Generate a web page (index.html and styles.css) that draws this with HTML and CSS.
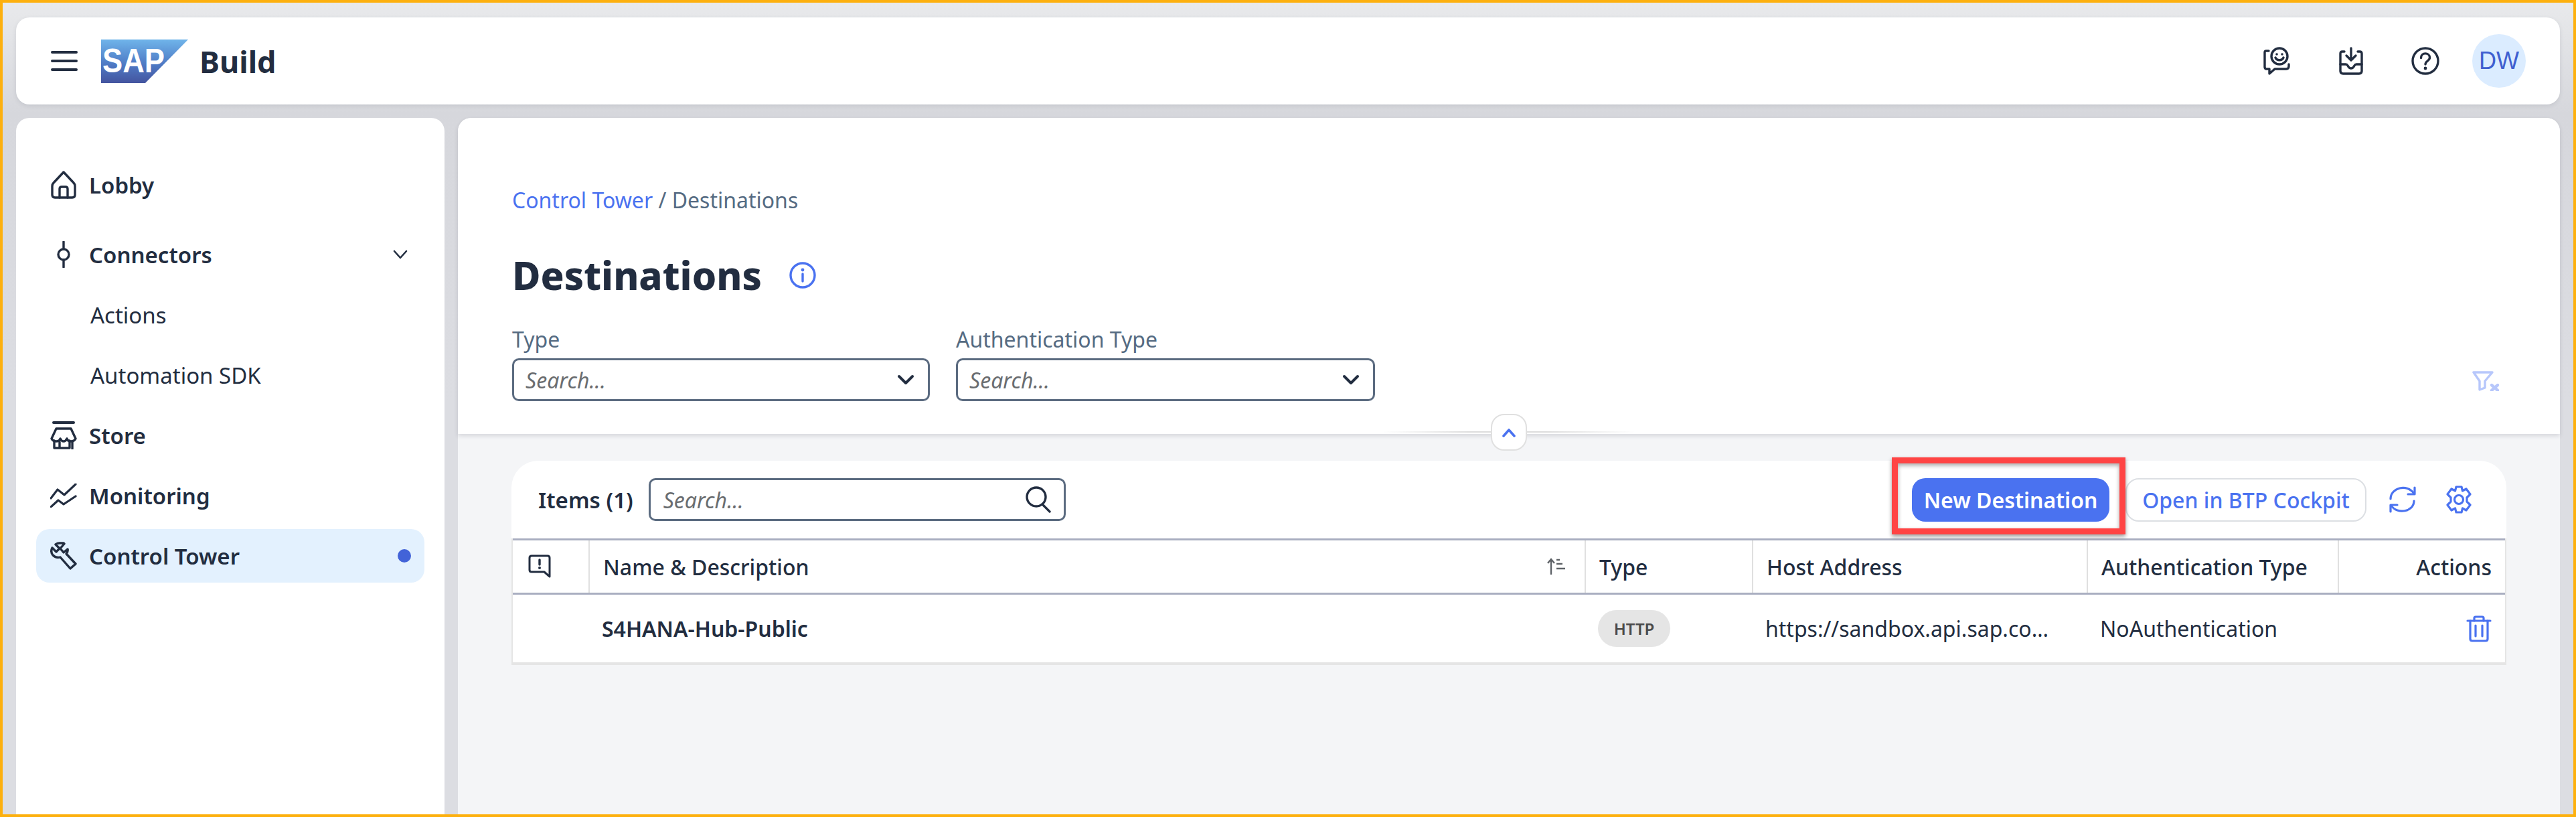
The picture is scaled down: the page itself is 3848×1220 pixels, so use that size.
FILE: index.html
```html
<!DOCTYPE html>
<html lang="en">
<head>
<meta charset="utf-8">
<title>Destinations - SAP Build</title>
<link rel="stylesheet" href="styles.css">
</head>
<body class="page">
<header class="topbar">
  <button class="plain burger" aria-label="Menu">
    <svg width="40" height="32" viewBox="0 0 40 32"><path d="M2 3H38M2 16H38M2 29H38" class="ink" stroke-width="4"/></svg>
  </button>
  <svg class="logo" width="130" height="65" viewBox="0 0 130 65">
    <defs><linearGradient id="sapg" x1="0" y1="0" x2="0" y2="1"><stop offset="0" stop-color="#6fb4ea"/><stop offset="0.55" stop-color="#4f7cc6"/><stop offset="1" stop-color="#44549f"/></linearGradient></defs>
    <polygon points="0,0 130,0 66,65 0,65" fill="url(#sapg)"/>
    <text x="2" y="49" class="logotext" textLength="93" lengthAdjust="spacingAndGlyphs">SAP</text>
  </svg>
  <span class="brand">Build</span>
  <div class="topicons">
    <svg class="ic-chat" width="40" height="42" viewBox="0 0 40 42"><g class="ink" stroke-width="3.4"><circle cx="24" cy="14" r="12"/><path d="M18 16c2 5 10 5 12 0" /><path d="M8 6H4Q2 6 2 8V30Q2 33 5 33H9V40L17 33H34Q38 33 38 29V26"/></g><circle cx="20" cy="11" r="1.8" class="inkfill"/><circle cx="28" cy="11" r="1.8" class="inkfill"/></svg>
    <svg class="ic-inbox" width="36" height="42" viewBox="0 0 36 42"><g class="ink" stroke-width="3.4"><path d="M8 7H5Q2 7 2 10V36Q2 40 6 40H30Q34 40 34 36V10Q34 7 31 7H28"/><path d="M2 26H10Q12 26 13 28Q15 32 18 32Q21 32 23 28Q24 26 26 26H34"/><path d="M18 2V19M11 13L18 20L25 13"/></g></svg>
    <svg class="ic-help" width="42" height="42" viewBox="0 0 42 42"><g class="ink" stroke-width="3.4"><circle cx="21" cy="21" r="19"/><path d="M14.5 16.5C14.5 7.5 27.5 8 27.5 16C27.5 21 21 21 21 26"/></g><circle cx="21" cy="32" r="2.4" class="inkfill"/></svg>
    <div class="avatar">DW</div>
  </div>
</header>

<div class="workspace">
  <nav class="sidebar">
    <a class="navrow strong">
      <span class="navicon"><svg width="38" height="42" viewBox="0 0 38 42"><g class="ink" stroke-width="3.4"><path d="M19 2L34 18Q36 20 36 23V36Q36 40 32 40H6Q2 40 2 36V23Q2 20 4 18Z"/><path d="M13 40V27Q13 24 16 24H22Q25 24 25 27V40"/></g></svg></span>Lobby
    </a>
    <a class="navrow strong gapped">
      <span class="navicon"><svg width="22" height="40" viewBox="0 0 22 40"><g class="ink" stroke-width="3.4"><circle cx="11" cy="20" r="8"/><path d="M11 1V12M11 28V39"/></g></svg></span>Connectors
      <svg class="navchev" width="22" height="14" viewBox="0 0 22 14"><path d="M2 2L11 12L20 2" class="ink" stroke-width="2.6"/></svg>
    </a>
    <a class="navrow sub">Actions</a>
    <a class="navrow sub">Automation SDK</a>
    <a class="navrow strong">
      <span class="navicon"><svg width="40" height="42" viewBox="0 0 40 42"><g class="ink" stroke-width="3.4"><path d="M5 2H35" stroke-width="4"/><path d="M9 11H31L38 26Q36 30 31 30Q26 30 25 26Q23 30 20 30Q17 30 15 26Q14 30 9 30Q4 30 2 26Z"/><path d="M6 29V40H29V29M14 40V31M33 30V41"/></g></svg></span>Store
    </a>
    <a class="navrow strong">
      <span class="navicon"><svg width="40" height="36" viewBox="0 0 40 36"><g class="ink" stroke-width="3.2"><path d="M1 22L11 9L21 17L38 1"/><path d="M1 35L12 25L20 31L38 19"/></g></svg></span>Monitoring
    </a>
    <a class="navrow strong active">
      <span class="navicon"><svg width="40" height="42" viewBox="0 0 40 42"><g class="ink" stroke-width="3.4"><path d="M14 2L20 2L21 3L15 10L20 16L26 11Q27 14 24 18L38 33L30 40L15 23Q9 25 4 20Q0 15 3 9L9 15L14 10L8 4Q11 2 14 2Z"/></g></svg></span>Control Tower
      <span class="navdot"></span>
    </a>
  </nav>

  <main class="content">
    <section class="pagehead">
      <div class="crumbs"><a class="crumblink">Control Tower</a> / Destinations</div>
      <div class="titlerow">
        <h1 class="title">Destinations</h1>
        <svg width="40" height="40" viewBox="0 0 40 40"><g class="blue" stroke-width="3.4"><circle cx="20" cy="20" r="18"/><path d="M20 18V29"/></g><circle cx="20" cy="12" r="2.4" class="bluefill"/></svg>
      </div>
      <div class="filters">
        <div class="field f1">
          <label class="fieldlabel">Type</label>
          <div class="input"><span class="placeholder">Search...</span><svg class="chev" width="26" height="16" viewBox="0 0 26 16"><path d="M3 3L13 13L23 3" class="ink" stroke-width="4"/></svg></div>
        </div>
        <div class="field f2">
          <label class="fieldlabel">Authentication Type</label>
          <div class="input"><span class="placeholder">Search...</span><svg class="chev" width="26" height="16" viewBox="0 0 26 16"><path d="M3 3L13 13L23 3" class="ink" stroke-width="4"/></svg></div>
        </div>
        <svg class="clearfilter" width="40" height="30" viewBox="0 0 40 30"><g class="pale" stroke-width="3.4"><path d="M2 2H30L19 15V25L11 28V15Z"/><path d="M29 21L38 29M38 21L29 29" stroke-width="4.4"/></g></svg>
      </div>
      <div class="divider"></div>
      <button class="collapse" aria-label="Collapse header"><svg width="20" height="14" viewBox="0 0 20 14"><path d="M2 12L10 3L18 12" class="blue" stroke-width="3.6"/></svg></button>
    </section>

    <section class="card">
      <div class="toolbar">
        <span class="items">Items (1)</span>
        <div class="input search"><span class="placeholder">Search...</span>
          <svg class="searchicon" width="40" height="40" viewBox="0 0 40 40"><g class="ink" stroke-width="3.4"><circle cx="17" cy="16" r="14"/><path d="M26 27L37 38"/></g></svg>
        </div>
        <div class="primarywrap">
          <button class="btn primary">New Destination</button>
          <span class="callout"></span>
        </div>
        <button class="btn outline">Open in BTP Cockpit</button>
        <svg class="refresh" width="42" height="42" viewBox="0 0 42 42"><g class="blue" stroke-width="3.2"><path d="M3 20C3 3 28 -3 38 12"/><path d="M39 3V13H29"/><path d="M38 23C38 39 13 44 4 30"/><path d="M3 39V29H13"/></g></svg>
        <svg class="gear" width="40" height="42" viewBox="0 0 40 42"><g class="blue" stroke-width="3.2"><circle cx="20" cy="21" r="6.5"/><path d="M16 2H24L25.500 8L31 5L37 13L32 18V24L37 29L31 37L25.500 34L24 40H16L14.500 34L9 37L3 29L8 24V18L3 13L9 5L14.500 8Z"/></g></svg>
      </div>
      <div class="table">
        <div class="row headrow">
          <div class="cell flagcell"><svg width="36" height="36" viewBox="0 0 36 36"><path d="M6 2H30Q33 2 33 5V33L25 26H6Q3 26 3 23V5Q3 2 6 2Z" class="ink" stroke-width="3"/><path d="M18 8V15" class="ink" stroke-width="3.4"/><circle cx="18" cy="20" r="2" class="inkfill"/></svg></div>
          <div class="cell namehead"><span>Name &amp; Description</span>
            <svg class="sort" width="28" height="26" viewBox="0 0 28 26"><path d="M6 25V2M1 8L6 2L11 8" class="sortline" stroke-width="2.4"/><path d="M14 3H19M14 9H23M14 16H27" class="sortline" stroke-width="2.6"/></svg>
          </div>
          <div class="cell">Type</div>
          <div class="cell">Host Address</div>
          <div class="cell">Authentication Type</div>
          <div class="cell endcell">Actions</div>
        </div>
        <div class="row bodyrow">
          <div class="cell"></div>
          <div class="cell rowname">S4HANA-Hub-Public</div>
          <div class="cell"><span class="pill">HTTP</span></div>
          <div class="cell"><span class="host">https://sandbox.api.sap.com/s4hanacloud</span></div>
          <div class="cell">NoAuthentication</div>
          <div class="cell endcell"><svg width="38" height="40" viewBox="0 0 38 40"><g class="blue" stroke-width="3.2"><path d="M2 8H36"/><path d="M12 8V4Q12 2 14 2H24Q26 2 26 4V8"/><path d="M6 8V35Q6 38 9 38H29Q32 38 32 35V8"/><path d="M14 15V31M24 15V31"/></g></svg></div>
        </div>
      </div>
    </section>
  </main>
</div>
</body>
</html>
```
FILE: styles.css
```css
* { box-sizing: border-box; }
html, body { height: 100%; }
.page {
  margin: 0;
  height: 1220px;
  overflow: hidden;
  border: 4px solid #fdb00e;
  background: linear-gradient(#e9eaec, #d6d7dc 170px, #dcdde2 600px);
  padding: 22px 20px 0;
  display: flex;
  flex-direction: column;
  gap: 20px;
  font-family: "Noto Sans", "Liberation Sans", sans-serif;
  font-size: 32px;
  color: #222d40;
}
.ink { fill: none; stroke: #222d40; stroke-linecap: round; stroke-linejoin: round; }
.inkfill { fill: #222d40; }
.blue { fill: none; stroke: #4a72f0; stroke-linecap: round; stroke-linejoin: round; }
.bluefill { fill: #4a72f0; }
.pale { fill: none; stroke: #b7c7fb; stroke-linecap: round; stroke-linejoin: round; }
.sortline { fill: none; stroke: #5f6368; }
.plain { background: none; border: 0; padding: 0; display: flex; }

.topbar {
  height: 130px;
  flex: none;
  background: #fff;
  border-radius: 20px;
  display: flex;
  align-items: center;
  padding: 0 51px 0 52px;
  box-shadow: 0 2px 6px rgba(60, 65, 80, .12);
}
.burger { margin-right: 35px; }
.logo { flex: none; margin-top: 1px; }
.logotext { font: 700 50px "Liberation Sans", sans-serif; fill: #fff; }
.brand { font-size: 45px; font-weight: 700; margin-left: 17px; }
.topicons { margin-left: auto; display: flex; align-items: center; }
.ic-chat { margin-right: 73px; }
.ic-inbox { margin-right: 72px; }
.ic-help { margin-right: 49px; }
.avatar {
  width: 80px; height: 80px;
  border-radius: 50%;
  background: #dbecff;
  color: #3f5fd0;
  font: 36px/80px "Liberation Sans", sans-serif;
  text-align: center;
}

.workspace { flex: 1; min-height: 0; display: flex; gap: 20px; }
.sidebar {
  width: 640px;
  flex: none;
  background: #fff;
  border-radius: 20px 20px 0 0;
  padding: 60px 30px 0;
  display: flex;
  flex-direction: column;
  gap: 10px;
}
.navrow { height: 80px; flex: none; display: flex; align-items: center; padding-left: 21px; border-radius: 20px; font-size: 33px; }
.strong { font-weight: 600; }
.gapped { margin-top: 14px; }
.sub { padding-left: 81px; font-weight: 400; }
.navicon { width: 40px; margin-right: 18px; display: flex; justify-content: center; }
.navchev { margin-left: auto; margin-right: 25px; }
.active { background: #e3f1fe; }
.navdot { width: 20px; height: 20px; border-radius: 50%; background: #4263d8; margin-left: auto; margin-right: 20px; }

.content { flex: 1; min-width: 0; background: #f4f5f7; border-radius: 20px 20px 0 0; }
.pagehead {
  position: relative;
  height: 472px;
  background: #fff;
  border-radius: 20px 20px 0 0;
  padding: 101px 91px 0 81px;
  box-shadow: 0 3px 6px rgba(60, 65, 80, .16);
}
.crumbs { line-height: 44px; font-size: 32px; color: #556b82; }
.crumblink { color: #4a72f0; }
.titlerow { display: flex; align-items: center; gap: 41px; margin-top: 50px; height: 80px; }
.title { margin: 0; font-size: 58px; font-weight: 800; line-height: 80px; }
.filters { display: flex; align-items: flex-end; margin-top: 36px; }
.field { flex: none; margin-right: 39px; }
.f1 { width: 624px; }
.f2 { width: 626px; }
.fieldlabel { display: block; height: 48px; line-height: 40px; font-size: 32px; color: #556b82; }
.input {
  height: 64px;
  border: 3px solid #5b6b80;
  border-radius: 10px;
  display: flex;
  align-items: center;
  justify-content: space-between;
  padding: 0 20px 0 17px;
  background: #fff;
}
.placeholder { font-style: italic; font-size: 32px; color: #6a6d70; }
.clearfilter { margin-left: auto; margin-bottom: 15px; }
.divider {
  position: absolute;
  left: 50%; top: 468px;
  width: 376px; height: 2px;
  transform: translateX(-50%);
  background: linear-gradient(90deg, transparent, #dcdcdc 35%, #dcdcdc 65%, transparent);
}
.pagehead .divider { top: 468px; }
.collapse {
  position: absolute;
  left: 50%; top: 442px;
  width: 54px; height: 55px;
  margin-left: -27px;
  padding: 0;
  border: 2px solid #e0e0e0;
  border-radius: 20px;
  background: #fff;
  display: flex;
  align-items: center;
  justify-content: center;
}

.card { margin: 40px 80px 0; background: #fff; border-radius: 40px 40px 0 0; }
.toolbar { height: 116px; display: flex; align-items: center; padding: 0 51px 0 40px; }
.items { font-size: 33px; font-weight: 600; margin-right: 23px; }
.search { width: 623px; padding: 0 18px 0 19px; }
.searchicon { flex: none; }
.primarywrap { position: relative; margin-left: auto; margin-right: 24px; display: flex; }
.btn { height: 65px; border-radius: 20px; font: inherit; font-size: 32px; padding: 0; white-space: nowrap; }
.primary { width: 295px; background: #4a72f0; color: #fff; border: 0; font-weight: 600; }
.outline { width: 360px; background: #fff; color: #4a72f0; border: 2px solid #dcdfe3; font-weight: 500; }
.callout {
  position: absolute;
  left: -30px; right: -24px; top: -31px; bottom: -19px;
  border: 9px solid #ff4444;
  box-shadow: 0 3px 6px rgba(0, 0, 0, .4), inset 0 3px 6px rgba(0, 0, 0, .35);
  pointer-events: none;
}
.refresh { margin-left: 33px; }
.gear { margin-left: 43px; }

.table { border-left: 2px solid #e5e5e5; border-right: 2px solid #e5e5e5; }
.row { display: grid; grid-template-columns: 113px 1488px 250px 500px 375px 250px; }
.headrow { height: 84px; border-top: 3px solid #a9aec0; border-bottom: 3px solid #a9aec0; font-weight: 500; font-size: 32px; }
.bodyrow { height: 105px; border-bottom: 4px solid #e5e5e5; }
.cell { display: flex; align-items: center; padding: 0 20px; min-width: 0; white-space: nowrap; }
.headrow .cell + .cell { border-left: 2px solid #e0e0e0; }
.flagcell { padding-left: 22px; }
.namehead { justify-content: space-between; padding-right: 28px; }
.rowname { font-weight: 600; padding-left: 20px; }
.pill { width: 108px; height: 55px; border-radius: 28px; background: #e5e5e5; color: #4a4a4a; font-size: 24px; font-weight: 600; display: flex; align-items: center; justify-content: center; }
.host { display: block; width: 432px; overflow: hidden; text-overflow: ellipsis; }
.endcell { justify-content: flex-end; }
```
